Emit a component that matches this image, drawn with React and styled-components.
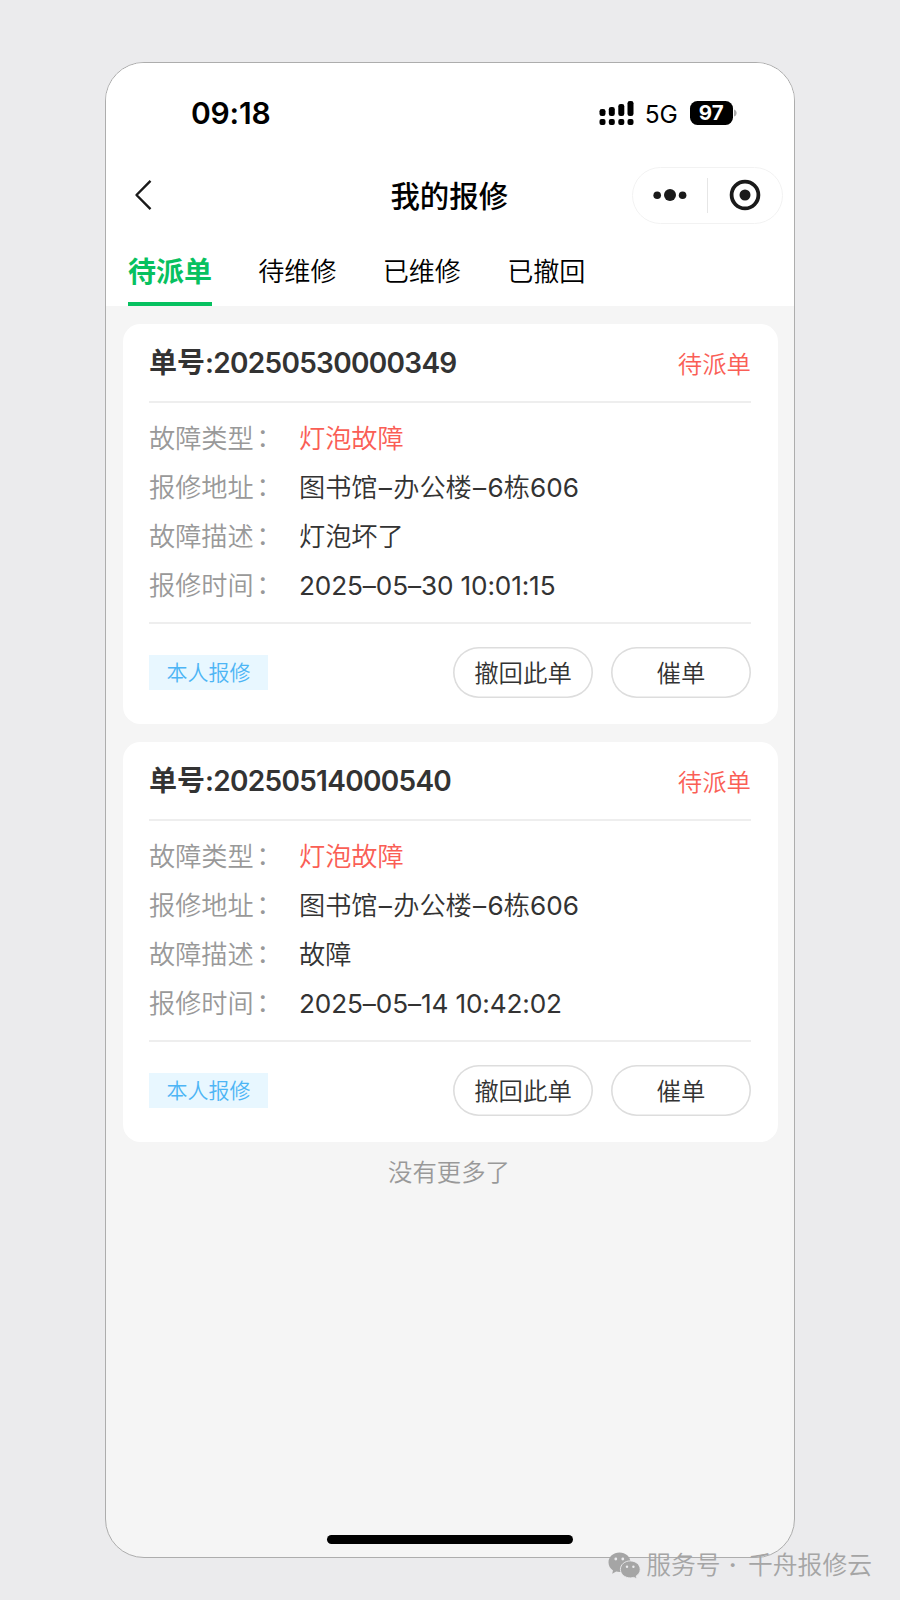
import React from "react";
import styled, { createGlobalStyle } from "styled-components";

const GlobalStyle = createGlobalStyle`
  *, *::before, *::after { box-sizing: border-box; }
  body {
    margin: 0;
    background: #ebebed;
    font-family: Inter, "Noto Sans CJK SC", sans-serif;
    font-weight: 350;
    color: #333;
  }
`;

const Stage = styled.main`
  position: relative;
  width: 900px;
  height: 1600px;
  padding: 62px 105px 42px;
  overflow: hidden;
`;

const Phone = styled.div`
  display: flex;
  flex-direction: column;
  width: 690px;
  height: 1496px;
  border: 1px solid #adadad;
  border-radius: 39px;
  background: #f5f5f5;
  overflow: hidden;
`;

const Header = styled.header`
  flex: none;
  height: 243px;
  background: #fff;
`;

const StatusBar = styled.div`
  display: flex;
  justify-content: space-between;
  align-items: center;
  height: 100px;
  padding: 0 57px 0 85px;
  color: #000;
`;

const Clock = styled.time`
  font-size: 30px;
  font-weight: 600;
  line-height: 36px;
  letter-spacing: -0.2px;
`;

const Indicators = styled.div`
  display: flex;
  align-items: center;
`;

const Network = styled.span`
  margin: 2px 12px 0 10.5px;
  font-size: 24.5px;
  font-weight: 400;
  line-height: 30px;
  letter-spacing: -0.2px;
`;

const Battery = styled.span`
  display: grid;
  place-items: center;
  width: 43.5px;
  height: 24px;
  border-radius: 7.5px;
  background: #000;
  color: #fff;
  font-size: 20.5px;
  font-weight: 650;
  line-height: 24px;
`;

const NavBar = styled.div`
  display: grid;
  grid-template-columns: 1fr auto 1fr;
  align-items: center;
  height: 65px;
  padding: 0 11.5px 0 28px;
`;

const BackButton = styled.button`
  display: flex;
  width: 20px;
  padding: 0 0 2px;
  border: 0;
  background: none;
`;

const Title = styled.h1`
  margin: 0;
  padding: 2px 18px 0 0;
  color: #000;
  font-size: 29.4px;
  font-weight: 500;
  line-height: 40px;
`;

const Capsule = styled.div`
  display: flex;
  align-items: center;
  justify-self: end;
  width: 151px;
  height: 57px;
  border: 1px solid #f2f2f2;
  border-radius: 29px;
`;

const CapsuleItem = styled.span`
  display: flex;
  flex: 1;
  justify-content: center;
  padding-bottom: 2px;

  & + & {
    border-left: 1px solid #e6e6e6;
    height: 35px;
    align-items: center;
  }
`;

const Tabs = styled.nav`
  display: flex;
  gap: 46.2px;
  height: 78px;
  padding-left: 22px;
`;

const Tab = styled.button`
  height: 78px;
  padding: 13px 0 0;
  border: 0;
  border-bottom: 4px solid ${(p) => (p.$active ? "#07c160" : "transparent")};
  background: none;
  font-family: inherit;
  font-size: ${(p) => (p.$active ? 28 : 26.1)}px;
  font-weight: ${(p) => (p.$active ? 700 : 350)};
  line-height: 60px;
  color: ${(p) => (p.$active ? "#07c160" : "#000")};
  white-space: nowrap;
`;

const List = styled.section`
  display: flex;
  flex-direction: column;
  flex: 1;
  gap: 17.5px;
  padding: 17.5px 16.5px 0;
`;

const Card = styled.article`
  height: 400.5px;
  padding: 0 26.5px;
  border-radius: 17.5px;
  background: #fff;
`;

const CardHead = styled.div`
  display: flex;
  justify-content: space-between;
  align-items: center;
  height: 79.5px;
  border-bottom: 2px solid #eee;
`;

const OrderNumber = styled.h2`
  margin: 0;
  padding-top: 2px;
  font-size: 28px;
  font-weight: 600;
  line-height: 40px;
`;

const Digits = styled.span`
  letter-spacing: -0.7px;
`;

const Status = styled.span`
  color: #fa5e55;
  font-size: 24.4px;
  line-height: 36px;
  padding-top: 3px;
`;

const Details = styled.dl`
  height: 221px;
  margin: 0;
  padding-top: 11px;
  border-bottom: 2px solid #eee;
`;

const DetailRow = styled.div`
  display: flex;
  height: 49.1px;
  font-size: 26.2px;
  line-height: 49px;
`;

const Label = styled.dt`
  width: 150px;
  color: #999;

  &::after {
    content: "：";
    margin-left: 2.5px;
    line-height: 1;
    vertical-align: 1px;
  }
`;

const Value = styled.dd`
  margin: 0;
  color: ${(p) => (p.$alert ? "#fa5e55" : "#333")};
`;

const Timestamp = styled.time`
  font-weight: 400;
  letter-spacing: -0.14px;
`;

const Room = styled.span`
  font-weight: 400;
`;

const Dash = styled.span`
  margin: 0 1.3px;
  font-weight: 400;
`;

const CardFoot = styled.div`
  display: flex;
  align-items: center;
  gap: 18px;
  height: 96.5px;
`;

const Tag = styled.span`
  width: 119px;
  height: 35px;
  margin-right: auto;
  background: #e8f7ff;
  color: #4db5f5;
  font-size: 21px;
  line-height: 35px;
  text-align: center;
`;

const ActionButton = styled.button`
  width: 140px;
  height: 51px;
  padding: 2px 0 0;
  border: 0;
  border-radius: 26px;
  background: #fff;
  box-shadow: inset 0 0 0 1.6px #ddd;
  color: #333;
  font-family: inherit;
  font-size: 24.4px;
  font-weight: 350;
  line-height: 49px;
`;

const ListEnd = styled.p`
  margin: -8px 2px 0 0;
  color: #999;
  font-size: 24.4px;
  line-height: 40px;
  text-align: center;
`;

const HomeIndicator = styled.div`
  width: 246px;
  height: 9px;
  margin: 0 auto 13px;
  border-radius: 5px;
  background: #000;
`;

const Watermark = styled.div`
  position: absolute;
  right: 28px;
  bottom: 17px;
  display: flex;
  align-items: center;
  gap: 5px;
  color: #a5a5a5;
  font-size: 24.8px;
  line-height: 36px;
  white-space: pre;
`;

const Separator = styled.span`
  margin: 0 5px 0 2px;
  font-weight: 600;
`;

const SignalIcon = () => (
  <svg width="35" height="24" viewBox="0 0 35 24" fill="#000">
    <rect x="0.5" y="8" width="6" height="7" rx="2.3" />
    <rect x="9.800" y="6" width="6" height="9" rx="2.3" />
    <rect x="19.300" y="3" width="6" height="12" rx="2.3" />
    <rect x="28.500" y="0" width="6" height="15" rx="2.3" />
    {[0.5, 9.8, 19.3, 28.5].map((x) => (
      <rect key={x} x={x} y="18" width="6" height="6" rx="2" />
    ))}
  </svg>
);

const BatteryCap = () => (
  <svg width="4" height="8" viewBox="0 0 4 8">
    <path d="M1 0.5C4.5 1.5 4.5 6.5 1 7.5Z" fill="#aaa" />
  </svg>
);

const BackIcon = () => (
  <svg width="20" height="32" viewBox="0 0 20 32" fill="none" stroke="#1a1a1a" strokeWidth="2.4">
    <path d="M16.5 1.8L2.5 16L16.5 30.2" strokeLinejoin="round" />
  </svg>
);

const MoreIcon = () => (
  <svg width="34" height="14" viewBox="0 0 34 14" fill="#1a1a1a">
    <circle cx="4.2" cy="7.3" r="3.8" />
    <circle cx="17" cy="7" r="6" />
    <circle cx="29.6" cy="7.3" r="3.8" />
  </svg>
);

const TargetIcon = () => (
  <svg width="32" height="32" viewBox="0 0 32 32">
    <circle cx="16" cy="16" r="13.4" fill="none" stroke="#1a1a1a" strokeWidth="3.8" />
    <circle cx="16" cy="16" r="5.5" fill="#1a1a1a" />
  </svg>
);

const WeChatIcon = () => (
  <svg width="33" height="27" viewBox="0 0 33 27">
    <path
      fill="#a5a5a5"
      d="M11.5 0.5C5.3 0.5 0.5 4.8 0.5 10.2c0 3.4 1.7 6.3 4.5 8.2l-.8 3.300 4-2.200c1 .2 2 .4 3.300.4 6.100 0 11-4.300 11-9.700S17.600 .5 11.500 .5z"
    />
    <path
      fill="#a5a5a5"
      stroke="#ebebed"
      strokeWidth="0.9"
      d="M22.300 8.900c-5.500 0-9.900 3.700-9.900 8.500s4.400 8.500 9.900 8.500c1.200 0 2.300-.2 3.300-.5l3.500 1.400-.9-2.800c2.500-1.600 4-3.900 4-6.600 0-4.800-4.400-8.500-9.900-8.500z"
    />
    <g fill="#ebebed">
      <circle cx="7.800" cy="7" r="1.400" />
      <circle cx="14.800" cy="7" r="1.400" />
      <circle cx="19" cy="14.700" r="1.200" />
      <circle cx="25.400" cy="14.700" r="1.200" />
    </g>
  </svg>
);

const tabs = ["待派单", "待维修", "已维修", "已撤回"];

const orders = [
  {
    id: "20250530000349",
    description: "灯泡坏了",
    time: "2025–05–30 10:01:15",
  },
  {
    id: "20250514000540",
    description: "故障",
    time: "2025–05–14 10:42:02",
  },
];

function OrderCard({ order }) {
  return (
    <Card>
      <CardHead>
        <OrderNumber>
          单号<Digits>:{order.id}</Digits>
        </OrderNumber>
        <Status>待派单</Status>
      </CardHead>
      <Details>
        <DetailRow>
          <Label>故障类型</Label>
          <Value $alert>灯泡故障</Value>
        </DetailRow>
        <DetailRow>
          <Label>报修地址</Label>
          <Value>
            图书馆<Dash>–</Dash>办公楼<Dash>–</Dash>
            <Room>6</Room>栋<Room>606</Room>
          </Value>
        </DetailRow>
        <DetailRow>
          <Label>故障描述</Label>
          <Value>{order.description}</Value>
        </DetailRow>
        <DetailRow>
          <Label>报修时间</Label>
          <Value>
            <Timestamp>{order.time}</Timestamp>
          </Value>
        </DetailRow>
      </Details>
      <CardFoot>
        <Tag>本人报修</Tag>
        <ActionButton>撤回此单</ActionButton>
        <ActionButton>催单</ActionButton>
      </CardFoot>
    </Card>
  );
}

export default function App() {
  return (
    <Stage>
      <GlobalStyle />
      <Phone>
        <Header>
          <StatusBar>
            <Clock>09:18</Clock>
            <Indicators>
              <SignalIcon />
              <Network>5G</Network>
              <Battery>97</Battery>
              <BatteryCap />
            </Indicators>
          </StatusBar>
          <NavBar>
            <BackButton aria-label="返回">
              <BackIcon />
            </BackButton>
            <Title>我的报修</Title>
            <Capsule>
              <CapsuleItem>
                <MoreIcon />
              </CapsuleItem>
              <CapsuleItem>
                <TargetIcon />
              </CapsuleItem>
            </Capsule>
          </NavBar>
          <Tabs>
            {tabs.map((name, i) => (
              <Tab key={name} $active={i === 0}>
                {name}
              </Tab>
            ))}
          </Tabs>
        </Header>
        <List>
          {orders.map((order) => (
            <OrderCard key={order.id} order={order} />
          ))}
          <ListEnd>没有更多了</ListEnd>
        </List>
        <HomeIndicator />
      </Phone>
      <Watermark>
        <WeChatIcon />
        <span>
          服务号<Separator> · </Separator>千舟报修云
        </span>
      </Watermark>
    </Stage>
  );
}
